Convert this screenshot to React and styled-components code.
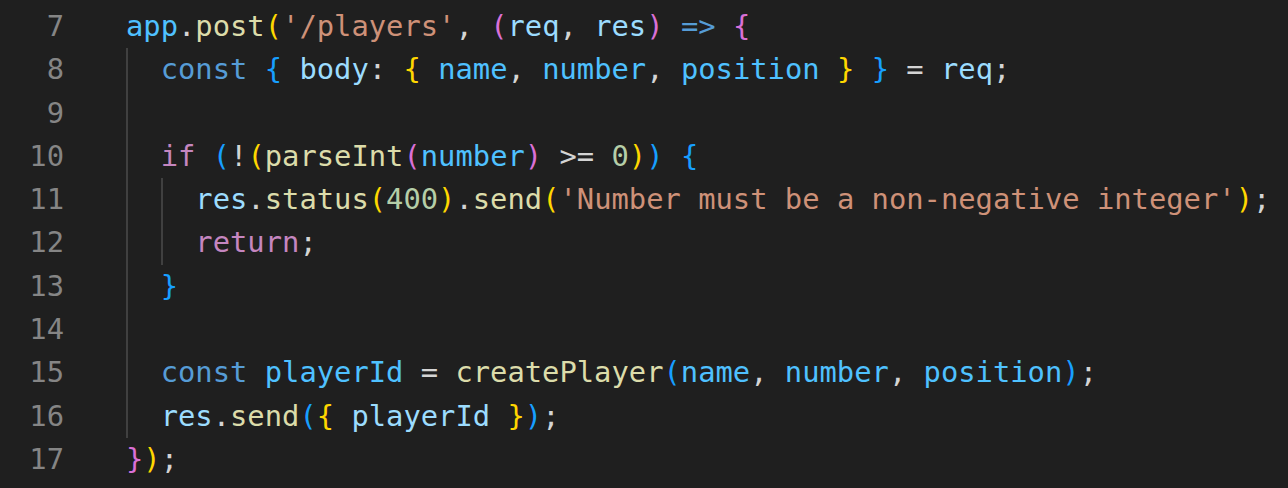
import React from "react";
import styled, { createGlobalStyle } from "styled-components";

const Global = createGlobalStyle`
  html, body {
    margin: 0;
    padding: 0;
    background: #1f1f1f;
  }
`;

const COLORS = {
  var: "#9CDCFE",
  con: "#4FC1FF",
  fn: "#DCDCAA",
  kw: "#569CD6",
  ctrl: "#C586C0",
  str: "#CE9178",
  num: "#B5CEA8",
  p: "#D4D4D4",
  b1: "#FFD700",
  b2: "#DA70D6",
  b3: "#179FFF",
};

const LH = "43.3px";

const Editor = styled.div`
  display: flex;
  width: 1288px;
  height: 488px;
  box-sizing: border-box;
  padding-top: 5px;
  background: #1f1f1f;
  font-family: "DejaVu Sans Mono", "Liberation Mono", monospace;
  font-size: 28.8px;
  line-height: ${LH};
  overflow: hidden;
`;

const Gutter = styled.div`
  display: flex;
  flex-direction: column;
  width: 64px;
  text-align: right;
  color: #858585;
`;

const LineNo = styled.div`
  height: ${LH};
`;

const Code = styled.div`
  display: flex;
  flex-direction: column;
  margin-left: 62px;
  white-space: pre;
  color: #d4d4d4;
`;

const Line = styled.div`
  height: ${LH};
`;

const Block = styled.div`
  display: flex;
  flex-direction: column;
  border-left: 2px solid #404040;
  padding-left: calc(2ch - 2px);
`;

const Tok = styled.span`
  color: ${(p) => COLORS[p.$c]};
`;

const L = (...toks) =>
  toks.map((t, i) =>
    typeof t === "string" ? (
      <Tok key={i} $c="p">{t}</Tok>
    ) : (
      <Tok key={i} $c={t[0]}>{t[1]}</Tok>
    )
  );

export default function App() {
  const nums = [7, 8, 9, 10, 11, 12, 13, 14, 15, 16, 17];
  return (
    <>
      <Global />
      <Editor>
        <Gutter>
          {nums.map((n) => (
            <LineNo key={n}>{n}</LineNo>
          ))}
        </Gutter>
        <Code>
          <Line>
            {L(
              ["con", "app"], ".", ["fn", "post"], ["b1", "("], ["str", "'/players'"], ", ",
              ["b2", "("], ["var", "req"], ", ", ["var", "res"], ["b2", ")"], " ",
              ["kw", "=>"], " ", ["b2", "{"]
            )}
          </Line>
          <Block>
            <Line>
              {L(
                ["kw", "const"], " ", ["b3", "{"], " ", ["var", "body"], ": ", ["b1", "{"], " ",
                ["con", "name"], ", ", ["con", "number"], ", ", ["con", "position"], " ",
                ["b1", "}"], " ", ["b3", "}"], " = ", ["var", "req"], ";"
              )}
            </Line>
            <Line> </Line>
            <Line>
              {L(
                ["ctrl", "if"], " ", ["b3", "("], "!", ["b1", "("], ["fn", "parseInt"], ["b2", "("],
                ["con", "number"], ["b2", ")"], " >= ", ["num", "0"], ["b1", ")"], ["b3", ")"], " ",
                ["b3", "{"]
              )}
            </Line>
            <Block>
              <Line>
                {L(
                  ["var", "res"], ".", ["fn", "status"], ["b1", "("], ["num", "400"], ["b1", ")"], ".",
                  ["fn", "send"], ["b1", "("], ["str", "'Number must be a non-negative integer'"],
                  ["b1", ")"], ";"
                )}
              </Line>
              <Line>{L(["ctrl", "return"], ";")}</Line>
            </Block>
            <Line>{L(["b3", "}"])}</Line>
            <Line> </Line>
            <Line>
              {L(
                ["kw", "const"], " ", ["con", "playerId"], " = ", ["fn", "createPlayer"], ["b3", "("],
                ["con", "name"], ", ", ["con", "number"], ", ", ["con", "position"], ["b3", ")"], ";"
              )}
            </Line>
            <Line>
              {L(
                ["var", "res"], ".", ["fn", "send"], ["b3", "("], ["b1", "{"], " ", ["var", "playerId"],
                " ", ["b1", "}"], ["b3", ")"], ";"
              )}
            </Line>
          </Block>
          <Line>{L(["b2", "}"], ["b1", ")"], ";")}</Line>
        </Code>
      </Editor>
    </>
  );
}
